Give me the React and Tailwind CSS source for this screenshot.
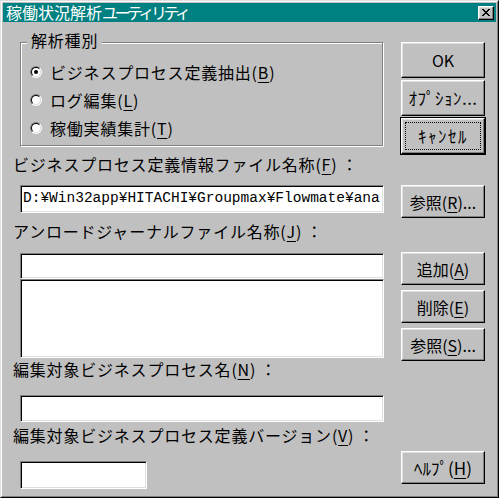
import React from 'react';

const raised = "border border-t-white border-l-white border-r-black border-b-black shadow-[inset_-1px_-1px_0_#808080,inset_1px_1px_0_#dfdfdf]";
const sunken = "border border-t-[#808080] border-l-[#808080] border-r-white border-b-white shadow-[inset_1px_1px_0_#000,inset_-1px_-1px_0_#dfdfdf] bg-white";

function Mn({ c }) {
    return <span className="underline underline-offset-[3px]">{c}</span>;
}

function Radio({ checked, children }) {
    return (
        <div className="h-[28px] flex items-center pl-[9px] gap-[8px]">
            <div className="w-[12px] h-[12px] rounded-full border border-t-[#808080] border-l-[#808080] border-r-white border-b-white">
                <div className="w-full h-full rounded-full border border-t-black border-l-black border-r-[#dfdfdf] border-b-[#dfdfdf] bg-white flex items-center justify-center">
                    {checked && <div className="w-[4px] h-[4px] rounded-full bg-black" />}
                </div>
            </div>
            <span className="leading-[16px]">{children}</span>
        </div>
    );
}

function Btn({ className, children }) {
    return (
        <div className={`${raised} ${className} flex items-center justify-center leading-[16px]`}>
            {children}
        </div>
    );
}

function CloseGlyph() {
    const px = [
        [0, 0], [1, 0], [6, 0], [7, 0],
        [1, 1], [2, 1], [5, 1], [6, 1],
        [2, 2], [3, 2], [4, 2], [5, 2],
        [3, 3], [4, 3],
        [2, 4], [3, 4], [4, 4], [5, 4],
        [1, 5], [2, 5], [5, 5], [6, 5],
        [0, 6], [1, 6], [6, 6], [7, 6],
    ];
    return (
        <svg width="8" height="7" viewBox="0 0 8 7" shapeRendering="crispEdges">
            {px.map(([x, y], i) => (
                <rect key={i} x={x} y={y} width="1" height="1" fill="#000" />
            ))}
        </svg>
    );
}

// full-width colon that trails each field label
function Colon() {
    return <span className="ml-[4px] tracking-normal">：</span>;
}

export default function App() {
    return (
        <div className="w-[499px] h-[498px] border border-t-[#dfdfdf] border-l-[#dfdfdf] border-r-black border-b-black font-['Noto_Sans_CJK_JP',sans-serif] text-[16px] text-black">
            <div className="h-full border border-t-white border-l-white border-r-[#808080] border-b-[#808080] bg-[#c0c0c0] p-[1px] flex flex-col">
                {/* title bar */}
                <div className="h-[19px] bg-[#008080] flex items-center pl-[3px] pr-[2px]">
                    <span className="flex-1 text-white leading-[19px] whitespace-nowrap">
                        稼働状況解析<span className="tracking-[-3.5px]">ユーティリティ</span>
                    </span>
                    <div className={`${raised} w-[16px] h-[14px] bg-[#c0c0c0] flex items-center justify-center`}>
                        <CloseGlyph />
                    </div>
                </div>

                <div className="flex-1 flex pl-[17px] tracking-[0.8px]">
                    {/* left column */}
                    <div className="w-[364px] flex flex-col pt-[20px]">
                        <div className="w-[363px] h-[104px] border border-[#808080] shadow-[inset_1px_1px_0_#fff,1px_1px_0_#fff] flex flex-col">
                            <span className="-mt-[11px] ml-[6px] px-[4px] bg-[#c0c0c0] self-start leading-[16px] h-[16px]">解析種別</span>
                            <div className="mt-[10px] flex flex-col">
                                <Radio checked>ビジネスプロセス定義抽出(<Mn c="B" />)</Radio>
                                <Radio>ログ編集(<Mn c="L" />)</Radio>
                                <Radio>稼働実績集計(<Mn c="T" />)</Radio>
                            </div>
                        </div>

                        <div className="mt-[10px] -ml-[7px] leading-[16px] h-[16px] whitespace-nowrap">ビジネスプロセス定義情報ファイル名称(<Mn c="F" />)<Colon /></div>
                        <div className={`${sunken} mt-[13px] h-[28px] flex items-center pl-[2px] overflow-hidden`}>
                            <span className="whitespace-nowrap font-['Liberation_Mono',monospace] text-[14.5px] tracking-normal">D:¥Win32app¥HITACHI¥Groupmax¥Flowmate¥ana</span>
                        </div>

                        <div className="mt-[10px] -ml-[7px] leading-[16px] h-[16px] whitespace-nowrap">アンロードジャーナルファイル名称(<Mn c="J" />)<Colon /></div>
                        <div className={`${sunken} mt-[14px] h-[26px]`} />
                        <div className={`${sunken} h-[79px]`} />

                        <div className="mt-[3px] -ml-[7px] leading-[16px] h-[16px] whitespace-nowrap">編集対象ビジネスプロセス名(<Mn c="N" />)<Colon /></div>
                        <div className={`${sunken} mt-[18px] h-[27px]`} />

                        <div className="mt-[5px] -ml-[7px] leading-[16px] h-[16px] whitespace-nowrap">編集対象ビジネスプロセス定義バージョン(<Mn c="V" />)<Colon /></div>
                        <div className={`${sunken} mt-[18px] h-[28px] w-[127px]`} />
                    </div>

                    {/* right column */}
                    <div className="w-[84px] ml-[17px] flex flex-col pt-[20px] tracking-normal">
                        <Btn className="h-[36px]">OK</Btn>
                        <Btn className="mt-[2px] h-[36px] text-[17px] tracking-[0.5px]">ｵﾌﾟｼｮﾝ...</Btn>
                        <div className={`${raised} mt-[2px] h-[36px] ring-1 ring-black flex p-[3px]`}>
                            <div className="flex-1 border border-dotted border-black flex items-center justify-center leading-[16px] text-[17px] tracking-[1.5px]">ｷｬﾝｾﾙ</div>
                        </div>
                        <Btn className="mt-[31px] h-[33px]">参照(<Mn c="R" />)...</Btn>
                        <Btn className="mt-[34px] h-[33px]">追加(<Mn c="A" />)</Btn>
                        <Btn className="mt-[5px] h-[33px]">削除(<Mn c="E" />)</Btn>
                        <Btn className="mt-[5px] h-[33px]">参照(<Mn c="S" />)...</Btn>
                        <Btn className="mt-[90px] h-[33px] text-[17px]">ﾍﾙﾌﾟ(<Mn c="H" />)</Btn>
                    </div>
                </div>
            </div>
        </div>
    );
}
